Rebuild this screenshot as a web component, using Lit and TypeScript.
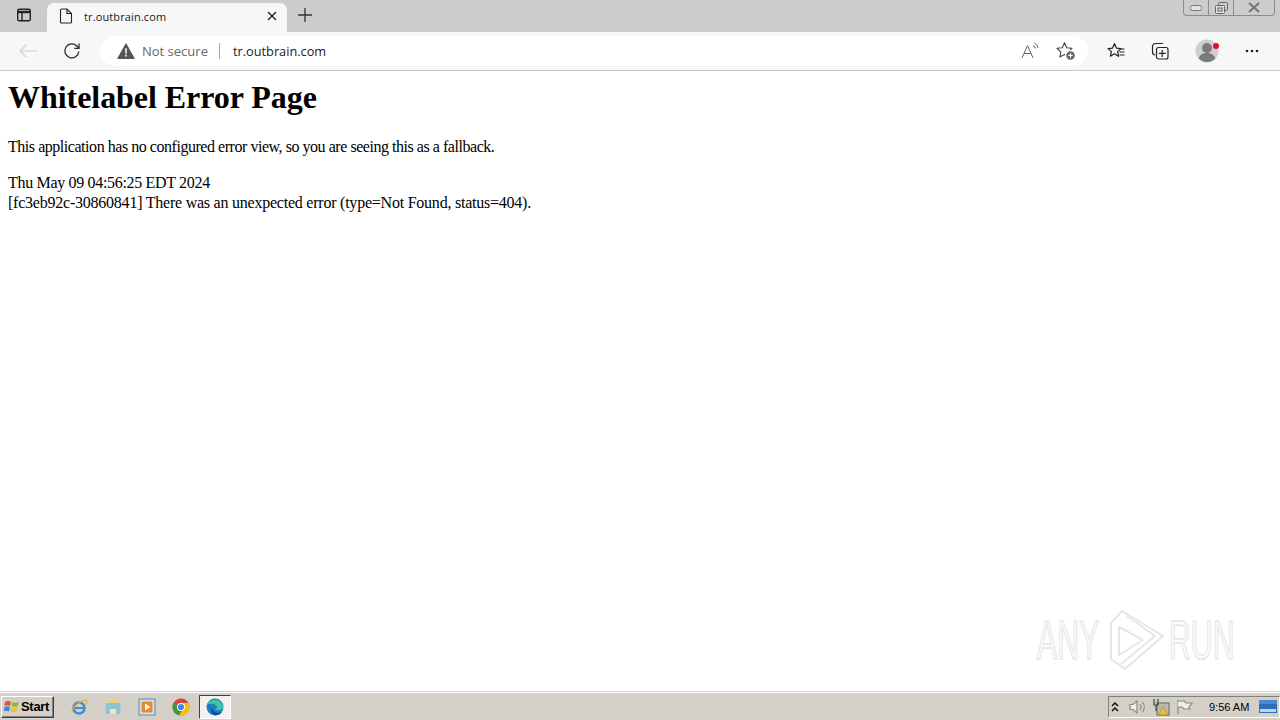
import { LitElement, html, css } from "lit";
import { customElement } from "lit/decorators.js";

@customElement("app-root")
export class AppRoot extends LitElement {
  static styles = css`
    :host { display: flex; flex-direction: column; width: 1280px; height: 720px; overflow: hidden; position: relative; background: #fff; font-family: "Open Sans", "Noto Sans", sans-serif; }
    svg { display: block; flex: none; }
    .tabstrip { height: 32px; background: #cccccc; display: flex; align-items: flex-end; flex: none; }
    .winbtn { width: 47px; height: 32px; display: flex; align-items: center; justify-content: center; padding: 0 0 2px 1px; box-sizing: border-box; }
    .tab { width: 240px; height: 29px; background: #f7f7f7; border-radius: 7px 7px 0 0; display: flex; align-items: center; box-sizing: border-box; padding: 0 10px 3px 12px; font-size: 11px; letter-spacing: 0.12px; color: #1a1a1a; gap: 11px; }
    .tab .title { flex: 1; }
    .newtab { width: 36px; height: 32px; display: flex; align-items: center; justify-content: center; padding: 0 0 2px 0; box-sizing: border-box; }
    .spacer { flex: 1; }
    .caption { align-self: flex-start; display: flex; height: 16px; margin-right: 5px; border: 1px solid #8c8c8c; border-top: none; border-radius: 0 0 4px 4px; box-sizing: border-box; }
    .caption div { display: flex; align-items: center; justify-content: center; border-left: 1px solid #8c8c8c; height: 15px; box-sizing: border-box; }
    .caption div:first-child { border-left: none; }
    .c1 { width: 24px; } .c2 { width: 25px; } .c3 { width: 41px; }
    .toolbar { height: 38px; background: #f7f7f7; border-bottom: 1px solid #c9c9c9; display: flex; align-items: center; flex: none; box-sizing: content-box; }
    .nav { height: 38px; display: flex; align-items: center; justify-content: center; flex: none; }
    .nav.first { width: 50px; padding-left: 6px; box-sizing: border-box; }
    .nav.second { width: 44px; }
    .address { margin-left: 6px; width: 988px; height: 30px; background: #fff; border-radius: 15px; display: flex; align-items: center; box-sizing: border-box; padding: 0 4px 0 17px; flex: none; }
    .warn { margin-right: 7px; }
    .ns { color: #666; font-size: 13px; }
    .sep { width: 1px; height: 16px; background: #aaa; margin: 0 13px 0 11px; }
    .url { color: #1a1a1a; flex: 1; font-size: 12.75px; }
    .addr-ic { width: 36px; display: flex; justify-content: center; }
    .tools { display: flex; align-items: center; flex: 1; margin-left: 6px; }
    .tool { width: 44px; display: flex; justify-content: center; align-items: center; }
    .tool.avatar { margin-left: 4px; }
    main { flex: 1; padding: 8px; box-sizing: border-box; font-family: "Liberation Serif", "Times New Roman", serif; color: #000; font-size: 16px; background: #fff; }
    h1 { font-size: 32px; line-height: 37px; margin: 0 0 22px; font-weight: bold; letter-spacing: -0.05px; }
    p { margin: 0 0 17px; line-height: 18px; letter-spacing: -0.46px; }
    .l { line-height: 20px; }
    .l1 { letter-spacing: -0.32px; }
    .l2 { letter-spacing: -0.23px; }
    .taskbar { height: 28px; flex: none; background: #d4d0c8; border-top: 1px solid #fff; box-shadow: 0 -1px 0 #d4d0c8; display: flex; align-items: center; box-sizing: border-box; }
    .start { width: 53px; height: 22px; margin-left: 1px; box-sizing: border-box; background: #d4d0c8; border: 1px solid; border-color: #fff #404040 #404040 #fff; box-shadow: inset -1px -1px 0 #808080; display: flex; align-items: center; gap: 1px; padding-left: 2px; font: bold 13px "Liberation Sans", Arial, sans-serif; letter-spacing: -0.3px; color: #000; }
    .apps { display: flex; align-items: center; margin-left: 8px; }
    .app { width: 34px; height: 24px; display: flex; align-items: center; justify-content: center; }
    .app.active { width: 32px; height: 24px; margin-left: 1px; background: #f4f2ee; border: 1px solid; box-sizing: border-box; border-color: #404040 #fff #fff #404040; }
    .tray { height: 22px; width: 172px; box-sizing: border-box; border: 1px solid; border-color: #808080 #fff #fff #808080; display: flex; align-items: center; font: 11px "Liberation Sans", Arial, sans-serif; color: #000; }
    .t1 { margin-right: 8px; } .t2 { margin-right: 5px; } .t3 { margin-right: 6px; }
    .clock { margin-left: 15px; margin-right: 10px; white-space: nowrap; }
    .wm { position: absolute; left: 1037px; top: 606px; display: flex; align-items: center; height: 68px; color: #fbfbfb; font: 55px/1 "Liberation Sans", Arial, sans-serif; -webkit-text-stroke: 1.5px #e6e6e6; }
    .wm span { display: inline-block; transform: scaleX(0.55); transform-origin: left center; white-space: nowrap; width: 68px; }
  `;

  render() {
    return html`
      <div class="tabstrip">
        <div class="winbtn">
          <svg width="16" height="16" viewBox="0 0 16 16" fill="none" stroke="#222" stroke-width="1.4"><rect x="1.7" y="2.2" width="12.6" height="11.6" rx="1.6"/><path d="M2 5h12" stroke-width="2.4"/><path d="M6 5v8.5"/></svg>
        </div>
        <div class="tab">
          <svg width="14" height="16" viewBox="0 0 14 16" fill="none" stroke="#222" stroke-width="1.1"><path d="M2.500 1h5.500l4.500 4.500v8.500a1 1 0 0 1-1 1h-9a1 1 0 0 1-1-1V2a1 1 0 0 1 1-1z"/><path d="M8 1v4.500h4.500"/></svg>
          <span class="title">tr.outbrain.com</span>
          <svg width="10" height="10" viewBox="0 0 10 10" stroke="#222" stroke-width="1.4"><path d="M1 1l8 8M9 1l-8 8"/></svg>
        </div>
        <div class="newtab">
          <svg width="16" height="16" viewBox="0 0 16 16" stroke="#333" stroke-width="1.3"><path d="M8 1v14M1 8h14"/></svg>
        </div>
        <div class="spacer"></div>
        <div class="caption">
          <div class="c1"><svg width="12" height="6" viewBox="0 0 12 6" fill="#e4e4e4" stroke="#777"><rect x="0.5" y="0.5" width="11" height="5" rx="2"/></svg></div>
          <div class="c2"><svg width="13" height="12" viewBox="0 0 13 12" fill="none" stroke="#666"><rect x="3.5" y="0.5" width="9" height="8" rx="1"/><rect x="0.5" y="3.5" width="9" height="8" rx="1" fill="#ddd"/><rect x="3" y="6" width="4" height="3"/></svg></div>
          <div class="c3"><svg width="14" height="11" viewBox="0 0 14 11" stroke="#777" stroke-width="2.2" fill="none"><path d="M2 1l10 9M12 1L2 10"/></svg></div>
        </div>
      </div>
      <div class="toolbar">
        <div class="nav first"><svg width="20" height="16" viewBox="0 0 20 16" fill="none" stroke="#d2d2d2" stroke-width="1.2"><path d="M19 8H2M8.5 1.500L2 8l6.500 6.500"/></svg></div>
        <div class="nav second"><svg width="18" height="18" viewBox="0 0 18 18" fill="none" stroke="#2a2a2a" stroke-width="1.3"><path d="M15.800 9.500a7 7 0 1 1-2-5.500l2.200 2.200"/><path d="M16 1.500v4.800h-4.800"/></svg></div>
        <div class="address">
          <svg class="warn" width="18" height="16" viewBox="0 0 18 16"><path d="M9 .8l8.300 14.700H.7z" fill="#555" stroke="#555" stroke-linejoin="round"/><path d="M9 5.200v5.200M9 11.500v2" stroke="#fff" stroke-width="1.5"/></svg>
          <span class="ns">Not secure</span>
          <span class="sep"></span>
          <span class="url">tr.outbrain.com</span>
          <div class="addr-ic"><svg width="18" height="18" viewBox="0 0 18 18" fill="none" stroke="#666" stroke-width="1"><path d="M1 16L6.500 3.500 12 16M3 11.500h7"/><path d="M12 3.500a4 4 0 0 1 2.500 3M13.500 1a6.500 6.500 0 0 1 3.500 5"/></svg></div>
          <div class="addr-ic"><svg width="20" height="20" viewBox="0 0 20 20" fill="none" stroke="#444" stroke-width="1.1"><path d="M8.500 1.800l2.200 4.900 5.300.6-3.900 3.600 1.100 5.200-4.700-2.700-4.700 2.700 1.100-5.200L1 7.300l5.300-.6z" stroke-linejoin="round"/><circle cx="14.500" cy="14.500" r="5.500" fill="#fff" stroke="none"/><circle cx="14.500" cy="14.500" r="4.300" fill="#666" stroke="none"/><path d="M14.500 12.200v4.600M12.200 14.500h4.600" stroke="#fff" stroke-width="1.2"/></svg></div>
        </div>
        <div class="tools">
          <div class="tool"><svg width="18" height="18" viewBox="0 0 18 18" fill="none" stroke="#222" stroke-width="1.2"><path d="M7.500 1.500l2 4.700 4.500.4-3.400 3 1 4.700-4.100-2.500-4.100 2.500 1-4.700-3.400-3 4.500-.4z" stroke-linejoin="round"/><path d="M12.500 7h5M12.500 10h5M12.500 13h5"/></svg></div>
          <div class="tool"><svg width="18" height="18" viewBox="0 0 18 18" fill="none" stroke="#222" stroke-width="1.2"><path d="M12 1.500H4.500a3 3 0 0 0-3 3V10a3 3 0 0 0 2.500 3"/><rect x="5.500" y="5.500" width="11.500" height="11.500" rx="2"/><path d="M11.200 8v7M7.800 11.300h7"/></svg></div>
          <div class="tool avatar"><svg width="26" height="26" viewBox="0 0 26 26"><circle cx="12" cy="13" r="11.500" fill="#cfcfcf"/><circle cx="12" cy="10" r="5" fill="#7a7a7a"/><path d="M3.800 20.500c1-4 4.300-5.500 8.200-5.500s7.200 1.500 8.200 5.500a11.500 11.500 0 0 1-16.400 0z" fill="#7a7a7a"/><circle cx="21" cy="8" r="3" fill="#e01020"/></svg></div>
          <div class="tool"><svg width="14" height="4" viewBox="0 0 14 4" fill="#222"><circle cx="2" cy="2" r="1.3"/><circle cx="7" cy="2" r="1.3"/><circle cx="12" cy="2" r="1.3"/></svg></div>
        </div>
      </div>
      <main>
        <h1>Whitelabel Error Page</h1>
        <p>This application has no configured error view, so you are seeing this as a fallback.</p>
        <div class="l l1">Thu May 09 04:56:25 EDT 2024</div>
        <div class="l l2">[fc3eb92c-30860841] There was an unexpected error (type=Not Found, status=404).</div>
      </main>
      <div class="wm">
        <span>ANY</span>
        <svg width="60" height="66" viewBox="0 0 60 66" fill="none" stroke="#e6e6e6" stroke-width="2" stroke-linejoin="round"><path d="M6 16L17 4l41 25-38 33L6 52z"/><path d="M14 20v28l24-15z"/><path d="M22 9l28 20"/><path d="M16 57l34-28"/></svg>
        <span style="margin-left:4px">RUN</span>
      </div>
      <div class="taskbar">
        <div class="start">
          <svg width="16" height="15" viewBox="0 0 16 15"><path d="M1 3c2-1.500 4-1.500 6 0L6 7C4 6 2.500 6 .5 7z" fill="#e8542a"/><path d="M8 3c2 1 4 1 6.500 0L14 7c-2 1-4 1-6.500 0z" fill="#8ab83a"/><path d="M.5 8c2-1 3.500-1 5.500 0l-1 4.500c-2-1-3.500-1-5.500 0z" fill="#3a86d8"/><path d="M7 8c2 1 4 1 6.500 0L13 12.500c-2 1-4.500 1-6.500 0z" fill="#f2c230"/></svg>
          Start
        </div>
        <div class="apps">
          <div class="app"><svg width="18" height="18" viewBox="0 0 18 18" fill="none"><circle cx="9" cy="10" r="5.500" stroke="#3b8fd6" stroke-width="2.6"/><path d="M4 10h10" stroke="#3b8fd6" stroke-width="2"/><path d="M2 15C1 11 8 4 15 2c3 0 2 4 0 6" stroke="#e8b030" stroke-width="1.2"/></svg></div>
          <div class="app"><svg width="18" height="17" viewBox="0 0 18 17"><path d="M2 4h5l1-2h6v3H2z" fill="#f0d080"/><rect x="1.500" y="5" width="15" height="11" rx="1" fill="#8cc4d8"/><path d="M6 16v-5h6v5z" fill="#f2e6b8"/></svg></div>
          <div class="app"><svg width="18" height="18" viewBox="0 0 18 18"><rect x="1" y="1" width="16" height="16" fill="#cfe0ee" stroke="#5a88b0"/><rect x="3.500" y="3.500" width="11" height="11" rx="2" fill="#e88a20"/><path d="M7 5.500v7l5.500-3.500z" fill="#fff"/></svg></div>
          <div class="app"><svg width="18" height="18" viewBox="0 0 18 18"><circle cx="9" cy="9" r="8.500" fill="#db4437"/><path d="M9 9L1.600 4.800A8.500 8.500 0 0 0 7 17.300z" fill="#3a9a4a"/><path d="M9 5h7.500a8.500 8.500 0 0 1-9.500 12.300L11 11z" fill="#f4c20d"/><circle cx="9" cy="9" r="4" fill="#fff"/><circle cx="9" cy="9" r="3.100" fill="#4285f4"/></svg></div>
          <div class="app active"><svg width="18" height="18" viewBox="0 0 18 18"><circle cx="9" cy="9" r="8.500" fill="#1b7fc4"/><path d="M1 7C3 1 14-1 17 8c.5 3-2 4-5 4-1.500 0-2.500-.5-2.500-1.500 2 0 2.500-2 0-3.500C6 5 2 6 1 7z" fill="#3fc7a0"/><path d="M9.500 17.300c-4-1-5.500-5-3.500-8 0 4 4 6.500 10 5-1.500 2-4 3-6.500 3z" fill="#0d4f8f"/></svg></div>
        </div>
        <div class="spacer"></div>
        <div class="tray">
          <svg class="t1" width="12" height="12" viewBox="0 0 12 12" fill="none" stroke="#111" stroke-width="1.5"><path d="M3 5l3-3 3 3M3 10l3-3 3 3"/></svg>
          <svg class="t2" width="18" height="16" viewBox="0 0 18 16" fill="none" stroke="#8a8a8a" stroke-width="1.2"><path d="M1 5.500h3L8 2v12l-4-3.500H1z" fill="#eee"/><path d="M11 5a5 5 0 0 1 0 6M13.500 3a8 8 0 0 1 0 10"/></svg>
          <svg class="t3" width="18" height="18" viewBox="0 0 18 18"><rect x="5" y="5" width="12" height="12" fill="#bdb9ae" stroke="#666"/><path d="M2 1v6h4V1M4 7v6" stroke="#444" fill="none" stroke-width="1.2"/><path d="M11 9l4.500 8h-9z" fill="#f2c230" stroke="#a08010" stroke-width=".6"/></svg>
          <svg width="18" height="16" viewBox="0 0 18 16" fill="none" stroke="#8a8a8a" stroke-width="1.2"><path d="M2 1v14"/><path d="M2 2h6l2 2h6l-3 4 1 2H8L6 8H2" fill="#eee"/></svg>
          <span class="clock">9:56 AM</span>
          <svg width="18" height="14" viewBox="0 0 18 14"><rect x="0" y="0" width="18" height="13" fill="#2f6fb8"/><rect x="1" y="9" width="16" height="3" fill="#bcd4ea"/><rect x="0" y="0" width="18" height="4" fill="#4a8ad0"/></svg>
        </div>
      </div>
    `;
  }
}
